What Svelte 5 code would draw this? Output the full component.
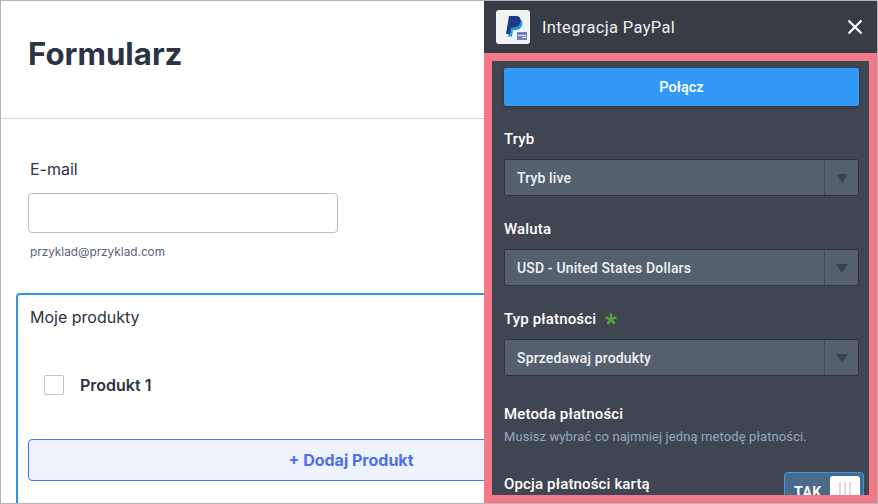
<script>
  const selects = [
    { label: 'Tryb', value: 'Tryb live' },
    { label: 'Waluta', value: 'USD - United States Dollars' },
    { label: 'Typ płatności', value: 'Sprzedawaj produkty', star: true }
  ];
</script>

<div class="page">
  <main class="form">
    <header class="form-head">
      <h1>Formularz</h1>
    </header>

    <section class="field">
      <label for="email">E-mail</label>
      <input id="email" type="text" />
      <small>przyklad@przyklad.com</small>
    </section>

    <section class="products">
      <h2>Moje produkty</h2>
      <div class="product">
        <span class="check"></span>
        <span class="product-name">Produkt 1</span>
      </div>
      <button class="add">+ Dodaj Produkt</button>
    </section>
  </main>

  <aside class="panel">
    <header class="panel-head">
      <div class="logo">
        <svg width="34" height="34" viewBox="0 0 34 34">
          <path d="M12 26.500 L14.800 9 H21.500 C25.500 9 27 11.200 26.300 14.500 C25.500 18.200 22.800 20 19.300 20 H17 L16 26.500 Z" fill="#2a9ad8" />
          <path d="M10 24 L13 6 H19.500 C23.500 6 25.300 8.200 24.500 11.800 C23.700 15.500 21 17.500 17.300 17.500 H15 L13.900 24 Z" fill="#1c3b84" />
          <rect x="21" y="22" width="10" height="8" fill="#6d83bd" />
          <rect x="22" y="25" width="8" height="1" fill="#eef0f5" />
          <rect x="26" y="27" width="4" height="1" fill="#eef0f5" />
        </svg>
      </div>
      <span class="panel-title">Integracja PayPal</span>
      <svg class="close" width="16" height="16" viewBox="0 0 16 16">
        <path d="M1.500 1.500 L14.500 14.500 M14.500 1.500 L1.500 14.500" stroke="#fff" stroke-width="2.200" />
      </svg>
    </header>

    <div class="panel-body">
      <button class="connect">Połącz</button>

      {#each selects as s}
        <div class="row-label">
          {s.label}
          {#if s.star}
            <svg class="star" width="14" height="14" viewBox="0 0 13 13">
              <path d="M5.300 0.500 H7.700 L7.400 4.500 L11 3 L12 5.200 L8.300 6.300 L10.800 9.400 L8.900 10.900 L6.500 7.600 L4.100 10.900 L2.200 9.400 L4.700 6.300 L1 5.200 L2 3 L5.600 4.500 Z" fill="#57a639" />
            </svg>
          {/if}
        </div>
        <div class="select">
          <span class="select-value">{s.value}</span>
          <span class="select-arrow"><i></i></span>
        </div>
      {/each}

      <div class="row-label method">Metoda płatności</div>
      <p class="hint">Musisz wybrać co najmniej jedną metodę płatności.</p>

      <div class="card-option">
        <span>Opcja płatności kartą</span>
        <div class="toggle">
          <b>TAK</b>
          <span class="knob"><i></i><i></i><i></i></span>
        </div>
      </div>
    </div>
  </aside>
</div>

<style>
  :global(body) {
    margin: 0;
    background: #fff;
  }

  .page {
    display: flex;
    width: 878px;
    height: 504px;
    box-sizing: border-box;
    overflow: hidden;
    border: solid #b4b4b4;
    border-width: 1px;
  }

  /* left side: the form, runs on under the panel */
  .form {
    width: 483px;
    flex-shrink: 0;
    overflow: hidden;
    font-family: Inter, sans-serif;
    color: #2c3345;
  }

  .form-head {
    height: 118px;
    box-sizing: border-box;
    padding: 33px 0 0 27px;
    border-bottom: 1px solid #d3d5df;
  }

  h1 {
    margin: 0;
    font-size: 31.200px;
    line-height: 40px;
    font-weight: 700;
  }

  .field {
    display: flex;
    flex-direction: column;
    align-items: flex-start;
    padding: 40px 0 0 27px;
  }

  label {
    font-size: 16px;
    line-height: 20px;
    margin-left: 2px;
  }

  input {
    width: 310px;
    height: 40px;
    box-sizing: border-box;
    margin-top: 14px;
    border: 1px solid #b8bdc9;
    border-radius: 4px;
    background: #fff;
  }

  small {
    margin: 11px 0 0 2px;
    font-size: 11.800px;
    line-height: 16px;
    color: #57607a;
  }

  .products {
    width: 672px;
    height: 230px;
    box-sizing: border-box;
    margin: 33px 0 0 15px;
    padding: 11px 10px 0 10px;
    border: 2px solid #3493e4;
    border-radius: 4px;
  }

  h2 {
    margin: 0 0 0 2px;
    font-size: 16px;
    line-height: 22px;
    font-weight: 400;
  }

  .product {
    display: flex;
    align-items: center;
    gap: 16px;
    margin: 47px 0 0 16px;
    height: 20px;
  }

  .check {
    width: 20px;
    height: 20px;
    box-sizing: border-box;
    border: 1px solid #bcc3d6;
    border-radius: 2px;
  }

  .product-name {
    font-size: 16px;
    font-weight: 600;
  }

  .add {
    display: block;
    width: 646px;
    height: 42px;
    margin-top: 44px;
    border: 1px solid #4c6ef0;
    border-radius: 4px;
    background: #eff3fe;
    color: #4c6ef0;
    font-family: Inter, sans-serif;
    font-size: 16px;
    font-weight: 700;
  }

  /* right side: the settings panel */
  .panel {
    width: 393px;
    flex-shrink: 0;
    display: flex;
    flex-direction: column;
    font-family: Roboto, sans-serif;
    color: #fff;
    background: #373c45;
  }

  .panel-head {
    height: 52px;
    flex-shrink: 0;
    display: flex;
    align-items: center;
    margin-left: 1px;
    padding: 0 14px 0 11px;
  }

  .logo {
    width: 34px;
    height: 34px;
    border-radius: 3px;
    background: #f2f3f5;
  }

  .panel-title {
    flex: 1;
    margin-left: 12px;
    font-size: 16.500px;
    letter-spacing: 0.35px;
    color: #eef0f4;
  }

  .panel-body {
    flex: 1;
    min-height: 0;
    overflow: hidden;
    box-sizing: border-box;
    padding: 7px 10px 0 12px;
    border: 8px solid #f27a88;
    background: #3f4651;
  }

  .connect {
    display: block;
    width: 100%;
    height: 38px;
    padding: 0;
    border: 0;
    border-radius: 2px;
    background: #3399f7;
    box-shadow: 0 1px 3px rgba(0, 0, 0, 0.35);
    color: #fff;
    font-family: Roboto, sans-serif;
    font-size: 14.500px;
    font-weight: 500;
  }

  .row-label {
    display: flex;
    align-items: center;
    gap: 8px;
    height: 20px;
    padding-top: 2px;
    margin-top: 21px;
    font-size: 15px;
    font-weight: 500;
    letter-spacing: 0.15px;
  }

  .star {
    margin-top: 1px;
  }

  .select {
    display: flex;
    height: 37px;
    box-sizing: border-box;
    margin-top: 10px;
    border: 1px solid #2f343c;
    border-radius: 2px;
    background: #55606e;
  }

  .select-value {
    flex: 1;
    align-self: center;
    padding-left: 12px;
    font-size: 14px;
    font-weight: 500;
    letter-spacing: 0.15px;
    color: #eff1f4;
  }

  .select-arrow {
    width: 33px;
    display: flex;
    align-items: center;
    justify-content: center;
    border-left: 1px solid #434a55;
  }

  .select-arrow i {
    width: 0;
    height: 0;
    margin-top: 2px;
    border: solid transparent;
    border-width: 9px 6px 0;
    border-top-color: #3c424c;
  }

  .row-label.method {
    margin-top: 26px;
  }

  .hint {
    margin: 5px 0 0;
    font-size: 13px;
    line-height: 16px;
    letter-spacing: 0.1px;
    color: #94a9c4;
  }

  .card-option {
    display: flex;
    justify-content: space-between;
    align-items: flex-start;
    margin-top: 27px;
    margin-right: -5px;
    font-size: 15px;
    font-weight: 500;
    letter-spacing: 0.15px;
    line-height: 20px;
  }

  .card-option > span {
    margin-top: 2px;
  }

  .toggle {
    display: flex;
    align-items: flex-start;
    justify-content: space-between;
    width: 80px;
    height: 34px;
    flex-shrink: 0;
    box-sizing: border-box;
    padding: 3px;
    border: 1px solid #3498f0;
    border-radius: 4px;
    background: #4a6a8a;
  }

  .toggle b {
    margin: 6px 0 0 6px;
    font-size: 14px;
    letter-spacing: 0.5px;
  }

  .knob {
    display: flex;
    justify-content: center;
    gap: 3px;
    width: 30px;
    height: 26px;
    padding-top: 6px;
    box-sizing: border-box;
    border-radius: 3px;
    background: #fff;
  }

  .knob i {
    width: 2px;
    height: 20px;
    background: #dcdcdc;
  }
</style>
